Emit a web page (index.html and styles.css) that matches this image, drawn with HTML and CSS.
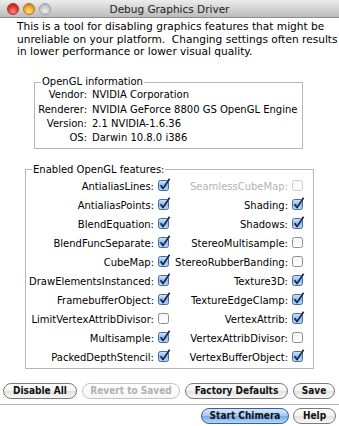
FILE: index.html
```html
<!DOCTYPE html>
<html lang="en">
<head>
  <meta charset="UTF-8">
  <title>Debug Graphics Driver</title>
  <link rel="stylesheet" href="styles.css">
</head>
<body>
  <svg width="0" height="0" class="defs">
    <defs>
      <linearGradient id="blueFill" x1="0" y1="0" x2="0" y2="1">
        <stop offset="0" stop-color="#d4e6fa"/>
        <stop offset="0.5" stop-color="#8fbcf0"/>
        <stop offset="1" stop-color="#b9d8f8"/>
      </linearGradient>
      <linearGradient id="whiteFill" x1="0" y1="0" x2="0" y2="1">
        <stop offset="0" stop-color="#f4f4f4"/>
        <stop offset="1" stop-color="#ffffff"/>
      </linearGradient>
      <symbol id="boxOn" viewBox="0 0 13 13">
        <rect x="0.5" y="2.5" width="10" height="10" rx="2" fill="url(#blueFill)" stroke="#4a6a98"/>
        <path d="M2.6 7.2 L5 10.6 L11.6 0.8" fill="none" stroke="#16244a" stroke-width="1.7" stroke-linejoin="round"/>
      </symbol>
      <symbol id="boxOff" viewBox="0 0 13 13">
        <rect x="0.5" y="2.5" width="10" height="10" rx="2" fill="url(#whiteFill)" stroke="#8e8e8e"/>
      </symbol>
      <symbol id="boxDisabled" viewBox="0 0 13 13">
        <rect x="0.5" y="2.5" width="10" height="10" rx="2" fill="#fafafa" stroke="#cdcdcd"/>
      </symbol>
    </defs>
  </svg>

  <div class="window">
    <div class="titlebar">
      <div class="lights">
        <span class="light red"></span>
        <span class="light amber"></span>
        <span class="light grey"></span>
      </div>
      <div class="title">Debug Graphics Driver</div>
      <div></div>
    </div>

    <p class="intro">This is a tool for disabling graphics features that might be<br>unreliable on your platform.&nbsp; Changing settings often results<br>in lower performance or lower visual quality.</p>

    <fieldset class="group info">
      <legend>OpenGL information</legend>
      <div class="info-grid">
        <span class="key">Vendor:</span><span>NVIDIA Corporation</span>
        <span class="key">Renderer:</span><span>NVIDIA GeForce 8800 GS OpenGL Engine</span>
        <span class="key">Version:</span><span>2.1 NVIDIA-1.6.36</span>
        <span class="key">OS:</span><span>Darwin 10.8.0 i386</span>
      </div>
    </fieldset>

    <fieldset class="group features">
      <legend>Enabled OpenGL features:</legend>
      <div class="feature-grid">
        <label class="feat">AntialiasLines:<svg class="cb"><use href="#boxOn"/></svg></label>
        <label class="feat disabled">SeamlessCubeMap:<svg class="cb"><use href="#boxDisabled"/></svg></label>
        <label class="feat">AntialiasPoints:<svg class="cb"><use href="#boxOn"/></svg></label>
        <label class="feat">Shading:<svg class="cb"><use href="#boxOn"/></svg></label>
        <label class="feat">BlendEquation:<svg class="cb"><use href="#boxOn"/></svg></label>
        <label class="feat">Shadows:<svg class="cb"><use href="#boxOn"/></svg></label>
        <label class="feat">BlendFuncSeparate:<svg class="cb"><use href="#boxOn"/></svg></label>
        <label class="feat">StereoMultisample:<svg class="cb"><use href="#boxOff"/></svg></label>
        <label class="feat">CubeMap:<svg class="cb"><use href="#boxOn"/></svg></label>
        <label class="feat">StereoRubberBanding:<svg class="cb"><use href="#boxOff"/></svg></label>
        <label class="feat">DrawElementsInstanced:<svg class="cb"><use href="#boxOn"/></svg></label>
        <label class="feat">Texture3D:<svg class="cb"><use href="#boxOn"/></svg></label>
        <label class="feat">FramebufferObject:<svg class="cb"><use href="#boxOn"/></svg></label>
        <label class="feat">TextureEdgeClamp:<svg class="cb"><use href="#boxOn"/></svg></label>
        <label class="feat">LimitVertexAttribDivisor:<svg class="cb"><use href="#boxOff"/></svg></label>
        <label class="feat">VertexAttrib:<svg class="cb"><use href="#boxOn"/></svg></label>
        <label class="feat">Multisample:<svg class="cb"><use href="#boxOn"/></svg></label>
        <label class="feat">VertexAttribDivisor:<svg class="cb"><use href="#boxOff"/></svg></label>
        <label class="feat">PackedDepthStencil:<svg class="cb"><use href="#boxOn"/></svg></label>
        <label class="feat">VertexBufferObject:<svg class="cb"><use href="#boxOn"/></svg></label>
      </div>
    </fieldset>

    <div class="actions">
      <button class="btn w-disable">Disable All</button>
      <button class="btn w-revert" disabled>Revert to Saved</button>
      <button class="btn w-factory">Factory Defaults</button>
      <button class="btn w-save">Save</button>
    </div>
    <hr class="sep">
    <div class="actions end">
      <button class="btn default w-start">Start Chimera</button>
      <button class="btn w-help">Help</button>
    </div>
  </div>
</body>
</html>
```

FILE: styles.css
```css
body {
  margin: 0;
  font-family: "DejaVu Sans", "Noto Sans", sans-serif;
  font-size: 10px;
  color: #000;
  background: #fff;
}
.defs {
  position: absolute;
}
.window {
  width: 339px;
  height: 426px;
  overflow: hidden;
  background: #fff;
}
.titlebar {
  height: 17px;
  display: grid;
  grid-template-columns: 1fr auto 1fr;
  align-items: center;
  background: linear-gradient(#ececec, #bcbcbc);
  border-bottom: 1px solid #8c8c8c;
}
.title {
  font-size: 10.5px;
  color: #222;
}
.lights {
  display: flex;
  gap: 4px;
  padding-left: 7px;
}
.light {
  width: 12px;
  height: 12px;
  border-radius: 50%;
  box-sizing: border-box;
}
.red {
  background: radial-gradient(circle at 50% 75%, #ff8a80 0, #e2352c 55%, #9e1a14 100%);
  border: 1px solid #a8322c;
}
.amber {
  background: radial-gradient(circle at 50% 75%, #ffe680 0, #f2a52a 55%, #b46a10 100%);
  border: 1px solid #b27420;
}
.grey {
  background: radial-gradient(circle at 50% 70%, #eeeeee 0, #c6c6c6 60%, #a8a8a8 100%);
  border: 1px solid #a0a0a0;
}
.intro {
  margin: 2px 0 0 17px;
  font-size: 10.6px;
  line-height: 12.7px;
  white-space: nowrap;
}
.group {
  border: 1px solid #b6b6b6;
  margin: 0;
  padding: 0;
}
.group legend {
  padding: 0 1px;
  margin-left: 6px;
  line-height: 12px;
}
.info {
  margin: 18px 36px 0 34px;
  padding: 0 0 2px 3px;
}
.info legend {
  margin-left: 3px;
}
.info-grid {
  display: grid;
  grid-template-columns: 49px 1fr;
  column-gap: 5px;
  line-height: 14.4px;
  white-space: nowrap;
}
.key {
  text-align: right;
}
.features {
  margin: 15px 25px 0 25px;
  padding: 1px 0 1px 0;
}
.feature-grid {
  display: grid;
  grid-template-columns: 144px 134px;
  grid-auto-rows: 19px;
}
.feat {
  display: flex;
  justify-content: flex-end;
  align-items: center;
  gap: 4px;
  white-space: nowrap;
}
.feat.disabled {
  color: #b4b4b4;
}
.cb {
  flex-shrink: 0;
  width: 13px;
  height: 13px;
  margin-top: -3px;
  margin-right: -1px;
}
.actions {
  display: flex;
  gap: 5px;
  padding: 0 3px;
  margin-top: 14px;
}
.actions.end {
  justify-content: flex-end;
  gap: 4px;
  margin-top: 3px;
}
.sep {
  border: 0;
  border-top: 1px solid #b8b8b8;
  margin: 5px 0 0 0;
}
.btn {
  font-family: "DejaVu Sans Condensed", "DejaVu Sans", sans-serif;
  font-size: 10px;
  font-weight: bold;
  color: #111;
  height: 16px;
  padding: 0;
  text-align: center;
  border: 1px solid #7a7a7a;
  border-radius: 8px;
  background: linear-gradient(#ffffff 0%, #f3f3f3 50%, #e2e2e2 52%, #f6f6f6 100%);
  line-height: 14px;
  white-space: nowrap;
}
.btn:disabled {
  color: #b0b0b0;
  border-color: #c4c4c4;
  background: linear-gradient(#ffffff, #f6f6f6);
}
.btn.default {
  border-color: #36609c;
  background: linear-gradient(#d6e8fb 0%, #a2c8f2 50%, #76acea 52%, #b4d6f8 100%);
}
.w-disable { width: 74px; }
.w-revert { width: 98px; }
.w-factory { width: 103px; }
.w-save { width: 42px; }
.w-start { width: 88px; }
.w-help { width: 43px; }
```
